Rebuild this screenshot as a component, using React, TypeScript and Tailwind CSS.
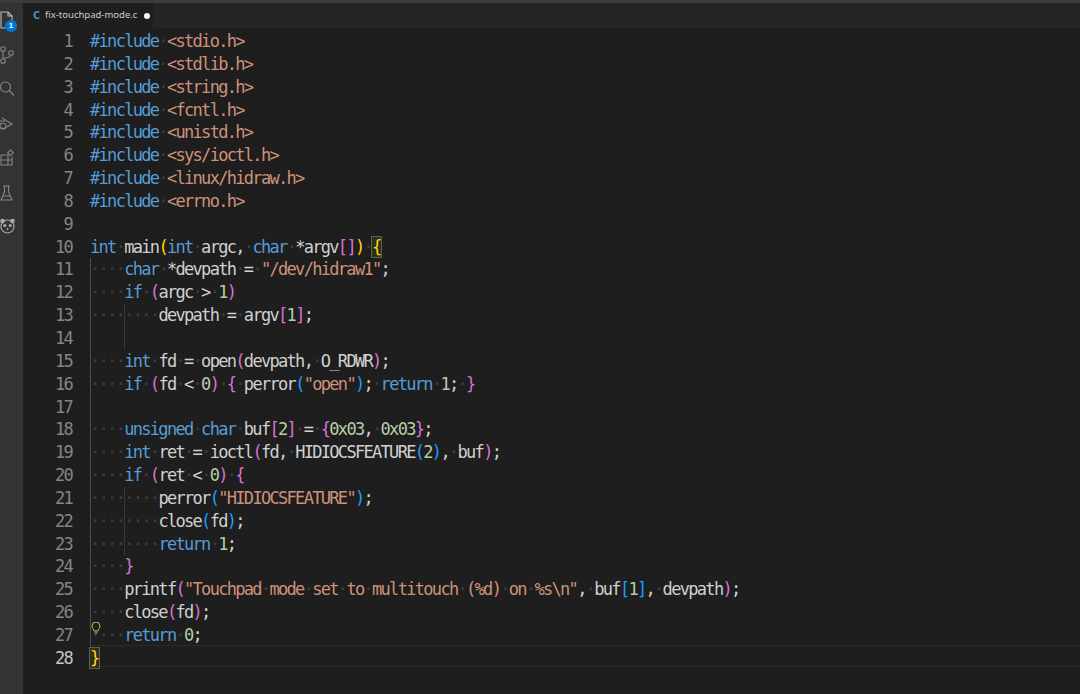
const K = "#569cd6", S = "#ce9178", N = "#b5cea8", T = "#d0d0d0", Y = "#ffd700", P = "#da70d6", B = "#179fff";

type Tok = [string, string?];
type Line = { indent?: number; toks?: Tok[]; blank?: boolean };

const inc = (name: string): Line => ({ toks: [["#include", K], [" "], [`<${name}>`, S]] });

const lines: Line[] = [
  inc("stdio.h"),
  inc("stdlib.h"),
  inc("string.h"),
  inc("fcntl.h"),
  inc("unistd.h"),
  inc("sys/ioctl.h"),
  inc("linux/hidraw.h"),
  inc("errno.h"),
  {},
  { toks: [["int", K], [" main"], ["(", Y], ["int", K], [" argc, "], ["char", K], [" *argv"], ["[]", P], [")", Y], [" "], ["{", "box"]] },
  { indent: 1, toks: [["char", K], [" *devpath = "], ['"/dev/hidraw1"', S], [";"]] },
  { indent: 1, toks: [["if", K], [" "], ["(", P], ["argc > "], ["1", N], [")", P]] },
  { indent: 2, toks: [["devpath = argv"], ["[", P], ["1", N], ["]", P], [";"]] },
  { indent: 2, blank: true },
  { indent: 1, toks: [["int", K], [" fd = open"], ["(", P], ["devpath, O_RDWR"], [")", P], [";"]] },
  { indent: 1, toks: [["if", K], [" "], ["(", P], ["fd < "], ["0", N], [")", P], [" "], ["{", P], [" perror"], ["(", B], ['"open"', S], [")", B], ["; "], ["return", K], [" "], ["1", N], ["; "], ["}", P]] },
  {},
  { indent: 1, toks: [["unsigned char", K], [" buf"], ["[", P], ["2", N], ["]", P], [" = "], ["{", P], ["0x03", N], [", "], ["0x03", N], ["}", P], [";"]] },
  { indent: 1, toks: [["int", K], [" ret = ioctl"], ["(", P], ["fd, HIDIOCSFEATURE"], ["(", B], ["2", N], [")", B], [", buf"], [")", P], [";"]] },
  { indent: 1, toks: [["if", K], [" "], ["(", P], ["ret < "], ["0", N], [")", P], [" "], ["{", P]] },
  { indent: 2, toks: [["perror"], ["(", B], ['"HIDIOCSFEATURE"', S], [")", B], [";"]] },
  { indent: 2, toks: [["close"], ["(", B], ["fd"], [")", B], [";"]] },
  { indent: 2, toks: [["return", K], [" "], ["1", N], [";"]] },
  { indent: 1, toks: [["}", P]] },
  { indent: 1, toks: [["printf"], ["(", P], ['"Touchpad mode set to multitouch (%d) on %s\\n"', S], [", buf"], ["[", B], ["1", N], ["]", B], [", devpath"], [")", P], [";"]] },
  { indent: 1, toks: [["close"], ["(", P], ["fd"], [")", P], [";"]] },
  { indent: 1, toks: [["return", K], [" "], ["0", N], [";"]] },
  { toks: [["}", "box"]] },
];

function Spaced({ text, color }: { text: string; color: string }) {
  // render whitespace is on, spaces show as faint dots
  const parts = text.split(/( )/);
  return (
    <>
      {parts.map((p, i) =>
        p === " " ? (
          <span key={i} className="text-[#3e3e3e]">·</span>
        ) : (
          <span key={i} style={{ color }}>{p}</span>
        )
      )}
    </>
  );
}

function Indent({ first, blank }: { first: boolean; blank?: boolean }) {
  return (
    <span className={`inline-block w-[34.2px] h-full align-top text-[#3e3e3e] border-l ${first ? "border-[#4a4a4a]" : "border-[#383838]"}`}>
      {!blank && <span className="-ml-px">····</span>}
    </span>
  );
}

function CodeRow({ line, n }: { line: Line; n: number }) {
  const active = n === 28;
  const guideOnly = n >= 11 && n <= 27 && !line.indent;
  return (
    <div className="flex h-[22.85px] leading-[22.85px]">
      <div className={`w-[72px] shrink-0 text-right ${active ? "text-[#c6c6c6]" : "text-[#858585]"}`}>{n}</div>
      <div className="w-[18px] shrink-0" />
      <div className="relative flex-1 whitespace-pre h-full">
        {active && <div className="absolute inset-x-0 -top-[2px] h-[22px] border-y border-[#2a2a2a]" />}
        {guideOnly && <span className="inline-block h-full align-top border-l border-[#4a4a4a]" />}
        {Array.from({ length: line.indent ?? 0 }).map((_, i) => (
          <Indent key={i} first={i === 0} blank={line.blank} />
        ))}
        {line.toks?.map(([text, color], i) =>
          color === "box" ? (
            <span key={i} className="relative text-[#ffd700] outline outline-[#5f6340] bg-[#2a2e24]">{text}</span>
          ) : (
            <Spaced key={i} text={text} color={color ?? T} />
          )
        )}
      </div>
    </div>
  );
}

function ActivityBar() {
  const cls = "block w-[23px] h-[20px] shrink-0 text-[#858585]";
  return (
    <div className="w-[23px] shrink-0 bg-[#333333] overflow-hidden flex flex-col gap-[14.5px] pt-[8px]">
      <div className="relative h-[20px]">
        <svg className="block w-[23px] h-[20px] text-[#bdbdbd]" viewBox="0 0 23 20" fill="none" stroke="currentColor" strokeWidth="1.1">
          <path d="M1 1h7l4 4v12H1z" />
          <path d="M8 1v4h4" />
        </svg>
        <span className="absolute left-[5px] top-[9px] w-[12px] h-[12px] rounded-full bg-[#0078d4] text-white text-[8px] leading-[12px] text-center font-['Liberation_Sans',sans-serif] font-bold tracking-normal">1</span>
      </div>
      <svg className={cls} viewBox="0 0 23 20" fill="none" stroke="currentColor" strokeWidth="1.1">
        <circle cx="3" cy="3" r="2.3" />
        <circle cx="3" cy="15" r="2.3" />
        <circle cx="11" cy="7" r="2.3" />
        <path d="M3 5.300v7.400M11 9.300c0 3-6 2-8 3.400" />
      </svg>
      <svg className={cls} viewBox="0 0 23 20" fill="none" stroke="currentColor" strokeWidth="1.1">
        <circle cx="5.500" cy="7" r="5" />
        <path d="M9.300 10.500l4.700 5" />
      </svg>
      <svg className={cls} viewBox="0 0 23 20" fill="none" stroke="currentColor" strokeWidth="1.1">
        <path d="M2 3l10 6-9 5" />
        <path d="M0 6h5M0 13h3" />
        <circle cx="3" cy="11" r="3" />
      </svg>
      <svg className={cls} viewBox="0 0 23 20" fill="none" stroke="currentColor" strokeWidth="1.1">
        <path d="M1 6h7v10H1zM1 11h11v5H8M8 6v5M12 11V8" />
        <path d="M10.500 1l2.800 2.800-2.800 2.800-2.800-2.800z" />
      </svg>
      <svg className={cls} viewBox="0 0 23 20" fill="none" stroke="currentColor" strokeWidth="1.1">
        <path d="M3 2h7M4.500 2v6L1 16h11L8.500 8V2M3 12h7" />
      </svg>
      <svg className={`${cls} text-[#a8a8a8]`} viewBox="0 0 23 20" fill="none">
        <circle cx="2.500" cy="3" r="2.300" fill="currentColor" />
        <circle cx="12.500" cy="3" r="2.300" fill="currentColor" />
        <circle cx="7.500" cy="8.500" r="6.500" stroke="currentColor" strokeWidth="1.2" />
        <circle cx="4.800" cy="7.500" r="1.500" fill="currentColor" />
        <circle cx="10.200" cy="7.500" r="1.500" fill="currentColor" />
        <circle cx="7.500" cy="11" r="0.900" fill="currentColor" />
      </svg>
    </div>
  );
}

export default function App() {
  return (
    <div className="w-[1080px] h-[694px] overflow-hidden flex flex-col bg-[#1e1e1e] font-['DejaVu_Sans_Mono',monospace] text-[17px] tracking-[-1.69px]">
      <div className="h-[3px] shrink-0 bg-[#3c3c3c]" />
      <div className="flex flex-1 min-h-0">
        <ActivityBar />
        <div className="flex-1 min-w-0 flex flex-col">
          <div className="h-[25px] shrink-0 bg-[#252526] flex">
            <div className="w-[130px] bg-[#1e1e1e] flex items-center whitespace-nowrap pl-[10px] font-['Noto_Sans',sans-serif] text-[9.5px] tracking-normal text-[#cccccc]">
              <span className="text-[#519aba] text-[11px] font-bold mr-[5px]">C</span>
              <span>fix-touchpad-mode.c</span>
              <span className="ml-[7px] w-[6px] h-[6px] shrink-0 rounded-full bg-white" />
            </div>
          </div>
          <div className="relative flex-1 -ml-[23px] pt-[2px]">
            {lines.map((line, i) => (
              <CodeRow key={i} line={line} n={i + 1} />
            ))}
            <svg className="absolute left-[91px] top-[594px] w-[10px] h-[13px] text-[#d7ba4d]" viewBox="0 0 10 13" fill="none" stroke="currentColor" strokeWidth="1">
              <path d="M3 9c0-2-2-2.500-2-5a4 4 0 0 1 8 0c0 2.500-2 3-2 5zM3.500 11h3" />
            </svg>
          </div>
        </div>
      </div>
    </div>
  );
}
